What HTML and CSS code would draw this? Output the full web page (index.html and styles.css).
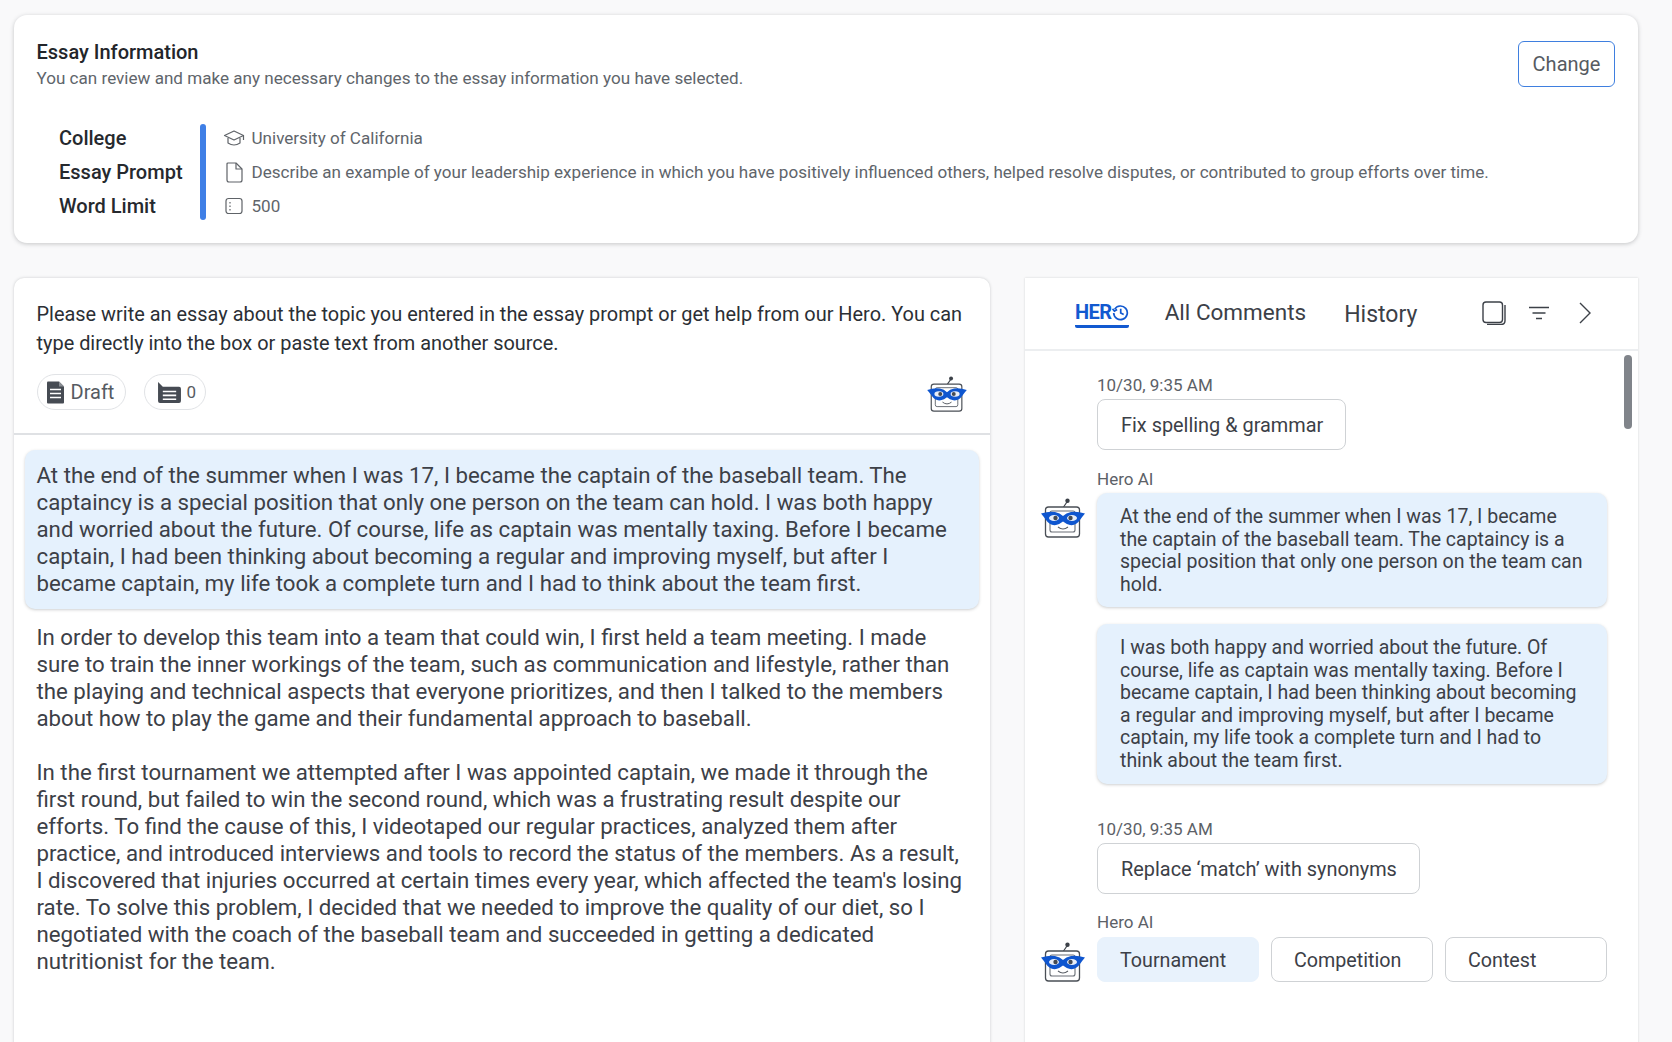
FILE: index.html
```html
<!DOCTYPE html>
<html lang="en">
<head>
<meta charset="utf-8">
<title>Essay</title>
<link rel="stylesheet" href="styles.css">
</head>
<body>
<svg class="defs" width="0" height="0">
  <symbol id="robot" viewBox="0 0 44 40">
    <circle cx="26.5" cy="2.8" r="2.2" fill="#3c4148"/>
    <path d="M26 4 L22.5 9" stroke="#3c4148" stroke-width="1.2" fill="none"/>
    <rect x="4.5" y="9" width="34" height="30" rx="3" fill="#fff" stroke="#4a4f56" stroke-width="1.3"/>
    <rect x="9" y="13" width="25" height="21" rx="2" fill="none" stroke="#6a6f76" stroke-width="1.1"/>
    <path d="M17 29 Q22 33 27 29" fill="none" stroke="#5a5f66" stroke-width="1.1"/>
    <path d="M0 15.5 Q8 13 14 14 Q19 15 22 18 Q25 15 30 14 Q36 13 44 15.5 Q41 19 39 22 Q35 28 29 27 Q25 26 22 23.5 Q19 26 15 27 Q9 28 5 22 Q3 19 0 15.5Z" fill="#0f56cf"/>
    <ellipse cx="13" cy="20" rx="5" ry="3" fill="#e8eef8"/>
    <ellipse cx="31" cy="20" rx="5" ry="3" fill="#e8eef8"/>
    <circle cx="14.5" cy="20" r="2.2" fill="#444a52"/>
    <circle cx="29.5" cy="20" r="2.2" fill="#444a52"/>
  </symbol>
</svg>

<section class="info-card">
  <div class="info-head">
    <div>
      <h1 class="info-title">Essay Information</h1>
      <p class="info-sub">You can review and make any necessary changes to the essay information you have selected.</p>
    </div>
    <button class="change-btn">Change</button>
  </div>
  <div class="info-body">
    <div class="info-labels">
      <div class="info-label">College</div>
      <div class="info-label">Essay Prompt</div>
      <div class="info-label">Word Limit</div>
    </div>
    <div class="info-bar"></div>
    <div class="info-values">
      <div class="info-value">
        <svg class="info-icon" viewBox="0 0 22 20" fill="none" stroke="#5f6368" stroke-width="1.2" stroke-linejoin="round"><path d="M1.5 7.5 L11 3 L20.5 7.5 L11 12 Z"/><path d="M5 10 V15 Q11 19 17 15 V10"/><path d="M20.5 7.5 V12"/></svg>
        University of California
      </div>
      <div class="info-value">
        <svg class="info-icon" viewBox="0 0 22 22" fill="none" stroke="#5f6368" stroke-width="1.2" stroke-linejoin="round"><path d="M4 3 Q4 2 5 2 H13 L19 8 V19 Q19 21 17 21 H6 Q4 21 4 19 Z"/><path d="M13 2 V8 H19"/></svg>
        Describe an example of your leadership experience in which you have positively influenced others, helped resolve disputes, or contributed to group efforts over time.
      </div>
      <div class="info-value">
        <svg class="info-icon" viewBox="0 0 22 20" fill="none" stroke="#5f6368" stroke-width="1.2"><rect x="3" y="2.5" width="16" height="15" rx="2.5"/><path d="M7 6 V14.5" stroke-dasharray="1.5 2"/></svg>
        500
      </div>
    </div>
  </div>
</section>

<main class="columns">
  <section class="editor">
    <header class="editor-head">
      <p class="editor-intro">Please write an essay about the topic you entered in the essay prompt or get help from our Hero. You can type directly into the box or paste text from another source.</p>
      <div class="editor-tools">
        <span class="pill">
          <svg class="pill-icon" viewBox="0 0 17 22"><path d="M0 1 Q0 0 1 0 H12 L17 5 V21 Q17 22 16 22 H1 Q0 22 0 21Z" fill="#464b53"/><path d="M3 8 H14 M3 12 H14 M3 16 H14" stroke="#fff" stroke-width="1.4"/><path d="M12 0 V5 H17" fill="#8a8e94"/></svg>
          Draft
        </span>
        <span class="pill pill-count">
          <svg class="pill-icon-wide" viewBox="0 0 24 22"><path d="M0 0 L5 5 H22 Q24 5 24 7 V20 Q24 22 22 22 H2 Q0 22 0 20Z" fill="#464b53"/><path d="M5 10 H19 M5 14 H19 M5 18 H19" stroke="#fff" stroke-width="1.6"/></svg>
          0
        </span>
        <svg class="robot robot-head"><use href="#robot"/></svg>
      </div>
    </header>
    <div class="essay">
      <p class="para para-active">At the end of the summer when I was 17, I became the captain of the baseball team. The captaincy is a special position that only one person on the team can hold. I was both happy and worried about the future. Of course, life as captain was mentally taxing. Before I became captain, I had been thinking about becoming a regular and improving myself, but after I became captain, my life took a complete turn and I had to think about the team first.</p>
      <p class="para">In order to develop this team into a team that could win, I first held a team meeting. I made sure to train the inner workings of the team, such as communication and lifestyle, rather than the playing and technical aspects that everyone prioritizes, and then I talked to the members about how to play the game and their fundamental approach to baseball.</p>
      <p class="para">In the first tournament we attempted after I was appointed captain, we made it through the first round, but failed to win the second round, which was a frustrating result despite our efforts. To find the cause of this, I videotaped our regular practices, analyzed them after practice, and introduced interviews and tools to record the status of the members. As a result, I discovered that injuries occurred at certain times every year, which affected the team's losing rate. To solve this problem, I decided that we needed to improve the quality of our diet, so I negotiated with the coach of the baseball team and succeeded in getting a dedicated nutritionist for the team.</p>
    </div>
  </section>

  <aside class="side">
    <nav class="tabs">
      <span class="tab-hero">HER<svg class="hero-clock" viewBox="0 0 16 16" fill="none" stroke="#1259d0" stroke-width="1.6"><path d="M2.5 5 A6.4 6.4 0 1 1 1.6 8.5"/><path d="M0.5 4.5 L2.3 6.8 L4.8 5.2"/><path d="M8.2 4.5 V8.4 L11 9.8"/></svg></span>
      <span class="tab tab-comments">All Comments</span>
      <span class="tab tab-history">History</span>
      <svg class="tab-icon tab-copy" viewBox="0 0 24 24" fill="none" stroke="#3c4148" stroke-width="1.4"><rect x="1" y="1" width="19.5" height="20.5" rx="3"/><path d="M23 4 V19.5 Q23 23.5 19 23.5 H5"/></svg>
      <svg class="tab-icon tab-filter" viewBox="0 0 22 14" fill="none" stroke="#3c4148" stroke-width="1.4"><path d="M1 1.5 H21 M4.5 7 H17.5 M8 12.5 H14"/></svg>
      <svg class="tab-icon tab-next" viewBox="0 0 14 22" fill="none" stroke="#3c4148" stroke-width="1.4"><path d="M2 1 L12 11 L2 21"/></svg>
    </nav>
    <div class="feed">
      <div class="scroll-thumb"></div>
      <div class="meta">10/30, 9:35 AM</div>
      <div class="chip chip-q">Fix spelling &amp; grammar</div>
      <div class="meta meta-ai">Hero AI</div>
      <div class="ai-row">
        <svg class="robot robot-ai"><use href="#robot"/></svg>
        <div class="bubbles">
          <p class="bubble">At the end of the summer when I was 17, I became the captain of the baseball team. The captaincy is a special position that only one person on the team can hold.</p>
          <p class="bubble">I was both happy and worried about the future. Of course, life as captain was mentally taxing. Before I became captain, I had been thinking about becoming a regular and improving myself, but after I became captain, my life took a complete turn and I had to think about the team first.</p>
        </div>
      </div>
      <div class="meta meta-second">10/30, 9:35 AM</div>
      <div class="chip chip-q chip-second">Replace ‘match’ with synonyms</div>
      <div class="meta meta-ai meta-ai-last">Hero AI</div>
      <div class="ai-row ai-row-options">
        <svg class="robot robot-ai"><use href="#robot"/></svg>
        <div class="options">
          <span class="option option-on">Tournament</span>
          <span class="option">Competition</span>
          <span class="option">Contest</span>
        </div>
      </div>
    </div>
  </aside>
</main>
</body>
</html>
```

FILE: styles.css
```css
* { box-sizing: border-box; }
html, body { margin: 0; height: 100%; }
body {
  height: 1042px;
  overflow: hidden;
  background: #f9f9fa;
  padding: 15px 34px 0 14px;
  font-family: Roboto, "Liberation Sans", sans-serif;
  color: #33373d;
}
.defs { position: absolute; }
p, h1 { margin: 0; }

.info-card {
  height: 228px;
  background: #fff;
  border-radius: 13px;
  box-shadow: 0 1px 4px rgba(60, 64, 67, .28);
  padding: 25px 23px 0 22.5px;
}
.info-head { display: flex; justify-content: space-between; align-items: flex-start; }
.info-title { font-size: 20px; font-weight: 500; line-height: 25px; color: #22252a; }
.info-sub { font-size: 17.08px; line-height: 26px; color: #60656b; }
.change-btn {
  width: 97px;
  height: 46px;
  margin-top: 1px;
  border: 1.5px solid #3f7fdf;
  border-radius: 6px;
  background: #fff;
  font: 400 20px Roboto, sans-serif;
  color: #565b62;
}
.info-body { display: flex; align-items: center; margin-top: 30px; }
.info-labels { width: 163px; padding-left: 22.5px; flex: none; }
.info-label { height: 34px; font-size: 20px; font-weight: 500; line-height: 34px; color: #26292e; white-space: nowrap; }
.info-bar { width: 6px; height: 96px; flex: none; background: #3f7fe6; border-radius: 3px; }
.info-values { margin-left: 17px; }
.info-value { display: flex; align-items: center; gap: 7px; height: 34px; font-size: 17.07px; line-height: 33px; color: #60656b; white-space: nowrap; }
.info-icon { width: 22px; height: 22px; flex: none; }

.columns { display: flex; gap: 35px; margin-top: 35px; }
.editor {
  width: 976px;
  height: 780px;
  flex: none;
  background: #fff;
  border-radius: 10px 10px 0 0;
  box-shadow: 0 0 3px rgba(60, 64, 67, .25);
}
.editor-head { height: 157px; padding: 23px 23px 0 22.5px; border-bottom: 2px solid #dfe1e4; }
.editor-intro { font-size: 19.93px; line-height: 28.5px; color: #2b2f35; }
.editor-tools { display: flex; align-items: center; gap: 18px; margin-top: 14px; }
.pill {
  display: inline-flex;
  align-items: center;
  gap: 6.5px;
  height: 36px;
  padding: 0 11px 0 9.5px;
  border: 1.5px solid #e1e3e6;
  border-radius: 18px;
  font-size: 20px;
  color: #565b62;
}
.pill-count { font-size: 17px; gap: 5px; padding: 0 9px 0 13px; }
.pill-icon { width: 17px; height: 23px; }
.pill-icon-wide { width: 23px; height: 21px; }
.robot { width: 44px; height: 40px; flex: none; }
.robot-head { width: 40px; height: 36px; margin-left: auto; margin-right: 0; margin-top: 4px; }
.essay { padding: 15px 11px 0; }
.para { font-size: 22.25px; line-height: 27px; color: #3c4047; padding: 12px 11.5px; margin-bottom: 0; }
.para-active {
  background: #e5f1fd;
  border-radius: 10px;
  box-shadow: 0 1px 3px rgba(60, 64, 67, .25);
  margin-bottom: 15px;
}
.para + .para { padding-top: 0; padding-bottom: 27px; }

.side {
  width: 613px;
  height: 780px;
  flex: none;
  background: #fff;
  box-shadow: 0 0 2px rgba(60, 64, 67, .2);
}
.tabs { display: flex; align-items: center; height: 73px; border-bottom: 2px solid #eceef0; padding-left: 50px; }
.tab-hero {
  display: inline-flex;
  align-items: center;
  height: 29px;
  font-size: 20px;
  font-weight: 700;
  letter-spacing: -.5px;
  color: #1259d0;
  border-bottom: 3px solid #1259d0;
  border-radius: 2px;
}
.hero-clock { width: 17px; height: 17px; }
.tab { color: #3c4047; }
.tab-comments { font-size: 22.5px; margin-left: 36px; margin-top: -3px; }
.tab-history { font-size: 23px; margin-left: 38px; margin-top: 2px; }
.tab-icon { flex: none; }
.tab-copy { width: 24px; height: 24px; margin-left: 65px; margin-top: -1px; }
.tab-filter { width: 22px; height: 14px; margin-left: 22px; margin-top: -1px; }
.tab-next { width: 14px; height: 22px; margin-left: 28px; margin-top: -1px; }
.feed { position: relative; padding: 0 0 0 72px; }
.scroll-thumb { position: absolute; right: 6px; top: 4px; width: 8px; height: 74px; border-radius: 4px; background: #80848a; }
.meta { font-size: 17px; line-height: 22px; color: #5c6167; padding-top: 23px; }
.meta-ai { padding-top: 19px; line-height: 20px; }
.meta-ai-last { padding-top: 18px; }
.meta-second { padding-top: 16.5px; }
.chip-q {
  display: inline-block;
  height: 51px;
  margin-top: 3px;
  padding: 0 22px 0 23px;
  border: 1.5px solid #cfd2d5;
  border-radius: 8px;
  font-size: 19.9px;
  line-height: 51px;
  color: #3c4047;
}
.chip-second { margin-top: 3px; }
.ai-row { position: relative; margin-top: 4px; }
.ai-row-options { margin-top: 5px; }
.robot-ai { position: absolute; left: -56.5px; top: 5px; }
.bubbles { width: 510px; }
.bubble {
  font-size: 19.5px;
  line-height: 22.5px;
  color: #3c4047;
  background: #e5f1fd;
  border-radius: 10px;
  box-shadow: 0 1px 3px rgba(60, 64, 67, .25);
  padding: 13px 22px 11px 23px;
  margin-bottom: 17px;
}
.bubble + .bubble { padding-bottom: 12px; }
.options { display: flex; gap: 12px; width: 510px; }
.option {
  width: 162px;
  height: 45px;
  padding: 0 22px;
  border: 1.5px solid #cfd2d5;
  border-radius: 8px;
  font-size: 19.7px;
  line-height: 45px;
  color: #3c4047;
}
.option-on { background: #e8f2fc; border-color: #e8f2fc; }
```
